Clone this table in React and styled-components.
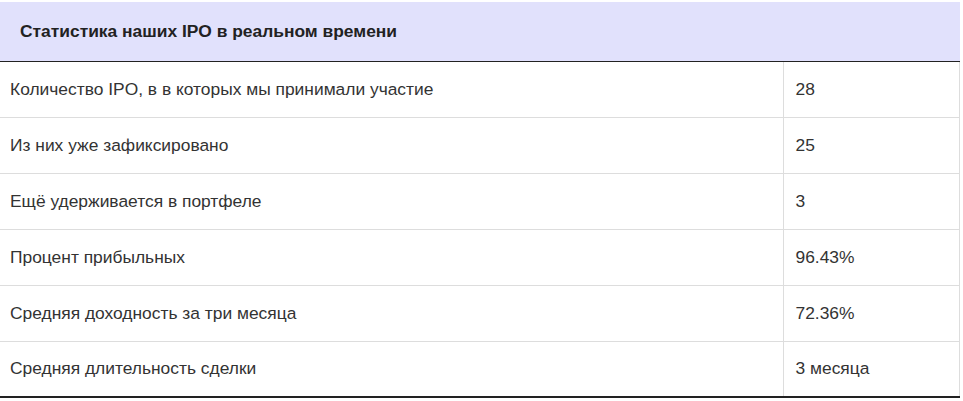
import React from 'react'
import styled, { createGlobalStyle } from 'styled-components'

const rows = [
  ['Количество IPO, в в которых мы принимали участие', '28'],
  ['Из них уже зафиксировано', '25'],
  ['Ещё удерживается в портфеле', '3'],
  ['Процент прибыльных', '96.43%'],
  ['Средняя доходность за три месяца', '72.36%'],
  ['Средняя длительность сделки', '3 месяца'],
]

const App = () => {
  return (
    <>
      <GlobalStyle />
      <Wrapper>
        <StatsTable>
          <colgroup>
            <col style={{ width: 783 }} />
            <col />
          </colgroup>
          <thead>
            <tr>
              <HeadCell colSpan={2}>Статистика наших IPO в реальном времени</HeadCell>
            </tr>
          </thead>
          <tbody>
            {rows.map(([label, value], i) => (
              <Row key={i} $last={i === rows.length - 1}>
                <LabelCell>{label}</LabelCell>
                <ValueCell>{value}</ValueCell>
              </Row>
            ))}
          </tbody>
        </StatsTable>
      </Wrapper>
    </>
  )
}

const GlobalStyle = createGlobalStyle`
  body {
    margin: 0;
    background: #fff;
    font-family: "Liberation Sans", Arial, sans-serif;
  }
`

const Wrapper = styled.div`
  padding-top: 2px;
  width: 960px;
`

const StatsTable = styled.table`
  width: 960px;
  border-collapse: collapse;
  table-layout: fixed;
  font-size: 17.4px;
  color: #333;
`

const HeadCell = styled.th`
  height: 59px;
  padding: 0 0 0 20px;
  box-sizing: border-box;
  background: #e1e1fc;
  border-bottom: 1px solid #222;
  text-align: left;
  font-weight: bold;
  color: #222;
`

const Row = styled.tr`
  height: 56px;
  border-bottom: ${(p) => (p.$last ? '2px solid #222' : '1px solid #ddd')};
`

const LabelCell = styled.td`
  padding: 0 0 0 10px;
  border-right: 1px solid #ddd;
`

const ValueCell = styled.td`
  padding: 0 0 0 12px;
  border-right: 1px solid #ddd;
`

export default App
